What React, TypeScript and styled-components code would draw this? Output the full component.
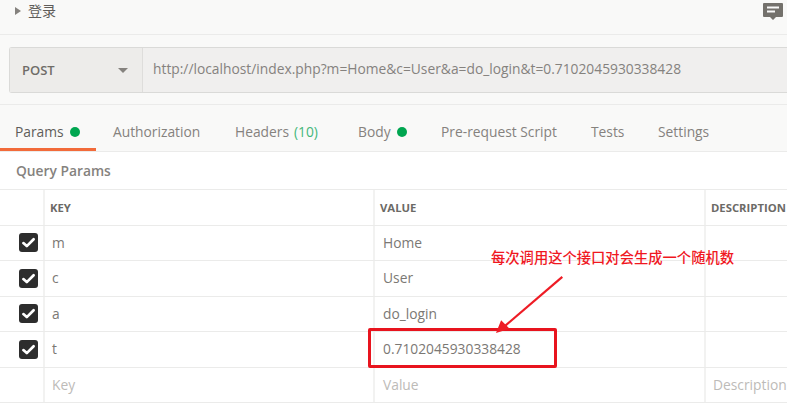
import React from 'react';
import styled, { createGlobalStyle } from 'styled-components';

const rows = [
  { key: 'm', value: 'Home' },
  { key: 'c', value: 'User' },
  { key: 'a', value: 'do_login' },
  { key: 't', value: '0.7102045930338428' },
];

const tabs = [
  { label: 'Params', dot: true, active: true, width: 96 },
  { label: 'Authorization', width: 122 },
  { label: 'Headers', count: '(10)', width: 123 },
  { label: 'Body', dot: true, width: 83 },
  { label: 'Pre-request Script', width: 150 },
  { label: 'Tests', width: 67 },
  { label: 'Settings', width: 90 },
];

export default function App() {
  return (
    <Page>
      <GlobalStyle />
      <Panel>
        <TitleBar>
          <Caret />
          <Title>登录</Title>
          <CommentIcon viewBox="0 0 20 17">
            <path
              fill="#74716c"
              fillRule="evenodd"
              d="M1 0h18a1 1 0 0 1 1 1v12a1 1 0 0 1-1 1h-6l-3 3-3-3H1a1 1 0 0 1-1-1V1a1 1 0 0 1 1-1Zm3 3.5v2h12v-2H4Zm0 4v2h8v-2H4Z"
            />
          </CommentIcon>
        </TitleBar>
        <UrlSection>
          <UrlBar>
            <Method>
              POST
              <MethodCaret />
            </Method>
            <UrlText>http://localhost/index.php?m=Home&amp;c=User&amp;a=do_login&amp;t=0.7102045930338428</UrlText>
          </UrlBar>
        </UrlSection>
        <Tabs>
          {tabs.map((tab) => (
            <Tab key={tab.label} $active={tab.active} $width={tab.width}>
              {tab.label}
              {tab.count && <Count>{tab.count}</Count>}
              {tab.dot && <Dot />}
            </Tab>
          ))}
        </Tabs>
        <Body>
          <SectionTitle>Query Params</SectionTitle>
          <Table>
            <HeadRow>
              <CheckCell />
              <HeadCell>KEY</HeadCell>
              <HeadCell>VALUE</HeadCell>
              <HeadCell>DESCRIPTION</HeadCell>
            </HeadRow>
            {rows.map((row) => (
              <Row key={row.key}>
                <CheckCell>
                  <Checkbox viewBox="0 0 20 20">
                    <path
                      d="M4.6 10.6l3.6 3.2L15.4 6.6"
                      fill="none"
                      stroke="#fff"
                      strokeWidth="2.8"
                      strokeLinecap="round"
                      strokeLinejoin="round"
                    />
                  </Checkbox>
                </CheckCell>
                <Cell $inset={7}>{row.key}</Cell>
                <Cell $inset={8}>{row.value}</Cell>
                <Cell $inset={7} />
              </Row>
            ))}
            <Row>
              <CheckCell />
              <Cell $inset={7} $placeholder>Key</Cell>
              <Cell $inset={8} $placeholder>Value</Cell>
              <Cell $inset={7} $placeholder>Description</Cell>
            </Row>
          </Table>
        </Body>
        <Note>每次调用这个接口对会生成一个随机数</Note>
        <Highlight />
        <Arrow viewBox="0 0 80 68">
          <path d="M78 1 9 60" stroke="#ee1c25" strokeWidth="2.6" fill="none" />
          <path d="M0 67 6 52 16 62Z" fill="#ee1c25" />
        </Arrow>
      </Panel>
    </Page>
  );
}

const GlobalStyle = createGlobalStyle`
  html,
  body {
    margin: 0;
    background: #fff;
  }
`;

const Page = styled.div`
  width: 794px;
  height: 408px;
  overflow: hidden;
`;

const Panel = styled.div`
  position: relative;
  width: 787px;
  height: 408px;
  overflow: hidden;
  background: #fff;
  font-family: 'Open Sans', 'Noto Sans CJK SC', sans-serif;
  font-size: 13.8px;
  color: #7b7874;
`;

const TitleBar = styled.div`
  height: 35px;
  padding: 0 4px 0 15px;
  box-sizing: border-box;
  display: flex;
  align-items: flex-start;
  background: #f9f9f8;
  border-bottom: 1px solid #ebebea;
`;

const Caret = styled.span`
  width: 0;
  height: 0;
  margin-top: 7px;
  border-left: 6px solid #85827e;
  border-top: 4.5px solid transparent;
  border-bottom: 4.5px solid transparent;
`;

const Title = styled.span`
  margin-left: 7px;
  line-height: 21px;
  font-family: 'Noto Sans CJK SC', sans-serif;
  font-size: 14px;
  color: #5f5d5a;
`;

const CommentIcon = styled.svg`
  width: 20px;
  height: 17px;
  margin: 3px 0 0 auto;
`;

const UrlSection = styled.div`
  height: 70px;
  padding: 12px 0 11px 9px;
  box-sizing: border-box;
  background: #f9f9f8;
  border-bottom: 1px solid #ebebea;
`;

const UrlBar = styled.div`
  height: 46px;
  display: flex;
  box-sizing: border-box;
  background: #f0efee;
  border: 1px solid #dadad8;
  border-right: 0;
  border-radius: 3px 0 0 3px;
`;

const Method = styled.div`
  width: 133px;
  padding: 0 14px 0 12px;
  box-sizing: border-box;
  display: flex;
  align-items: center;
  justify-content: space-between;
  background: #edecea;
  border-right: 1px solid #dedddb;
  font-size: 13px;
  font-weight: 600;
  color: #6f6c68;
`;

const MethodCaret = styled.span`
  width: 0;
  height: 0;
  border-top: 5px solid #85827e;
  border-left: 5px solid transparent;
  border-right: 5px solid transparent;
`;

const UrlText = styled.div`
  padding: 0 0 3px 10px;
  display: flex;
  align-items: center;
  color: #85827e;
`;

const Tabs = styled.div`
  height: 47px;
  display: flex;
  box-sizing: border-box;
  background: #f9f9f8;
  border-bottom: 1px solid #ebebea;
`;

const Tab = styled.div<{ $active?: boolean; $width: number }>`
  width: ${(p) => p.$width}px;
  height: 46px;
  flex: none;
  box-sizing: border-box;
  padding: 10px 0 0 15px;
  display: flex;
  align-items: center;
  color: ${(p) => (p.$active ? '#5f5d5a' : '#85827e')};
  border-bottom: 3px solid ${(p) => (p.$active ? '#f26b3a' : 'transparent')};

  &:first-child {
    margin-right: 2px;
  }
`;

const Count = styled.span`
  margin-left: 5px;
  color: #43b77a;
`;

const Dot = styled.span`
  width: 10px;
  height: 10px;
  margin-left: 6px;
  border-radius: 50%;
  background: #00a650;
`;

const Body = styled.div`
  background: #fff;
`;

const SectionTitle = styled.div`
  height: 37px;
  padding-left: 16px;
  line-height: 37px;
  font-weight: 600;
  color: #85827e;
`;

const Table = styled.div`
  border-top: 1px solid #ebebea;
`;

const HeadRow = styled.div`
  height: 35.5px;
  display: grid;
  grid-template-columns: 45px 330px 331px 1fr;
  box-sizing: border-box;
  border-bottom: 1px solid #ebebea;
`;

const Row = styled(HeadRow)``;

const CheckCell = styled.div`
  display: flex;
  align-items: center;
  padding-left: 19px;
  box-sizing: border-box;
  border-right: 2px solid #f2f2f1;
`;

const HeadCell = styled.div`
  padding-left: 5px;
  display: flex;
  align-items: center;
  box-sizing: border-box;
  font-size: 11.3px;
  font-weight: 700;
  white-space: nowrap;
  color: #6c6a66;
  border-right: 2px solid #f2f2f1;

  &:last-child {
    border-right: 0;
  }
`;

const Cell = styled.div<{ $placeholder?: boolean; $inset: number }>`
  padding: 0 0 1px ${(p) => p.$inset}px;
  display: flex;
  align-items: center;
  box-sizing: border-box;
  white-space: nowrap;
  color: ${(p) => (p.$placeholder ? '#bdbbb8' : '#7b7874')};
  border-right: 2px solid #f2f2f1;

  &:last-child {
    border-right: 0;
  }
`;

const Checkbox = styled.svg`
  width: 19px;
  height: 19px;
  background: #2d2d2d;
  border-radius: 3px;
`;

const Note = styled.div`
  position: absolute;
  left: 491px;
  top: 246px;
  font-size: 14.3px;
  font-weight: 500;
  font-family: 'Noto Sans CJK SC', sans-serif;
  color: #f0181f;
  white-space: nowrap;
`;

const Highlight = styled.div`
  position: absolute;
  left: 368px;
  top: 328px;
  width: 189px;
  height: 40px;
  box-sizing: border-box;
  border: 3px solid #e8141e;
  border-radius: 2px;
`;

const Arrow = styled.svg`
  position: absolute;
  left: 496px;
  top: 276px;
  width: 68px;
  height: 58px;
`;
